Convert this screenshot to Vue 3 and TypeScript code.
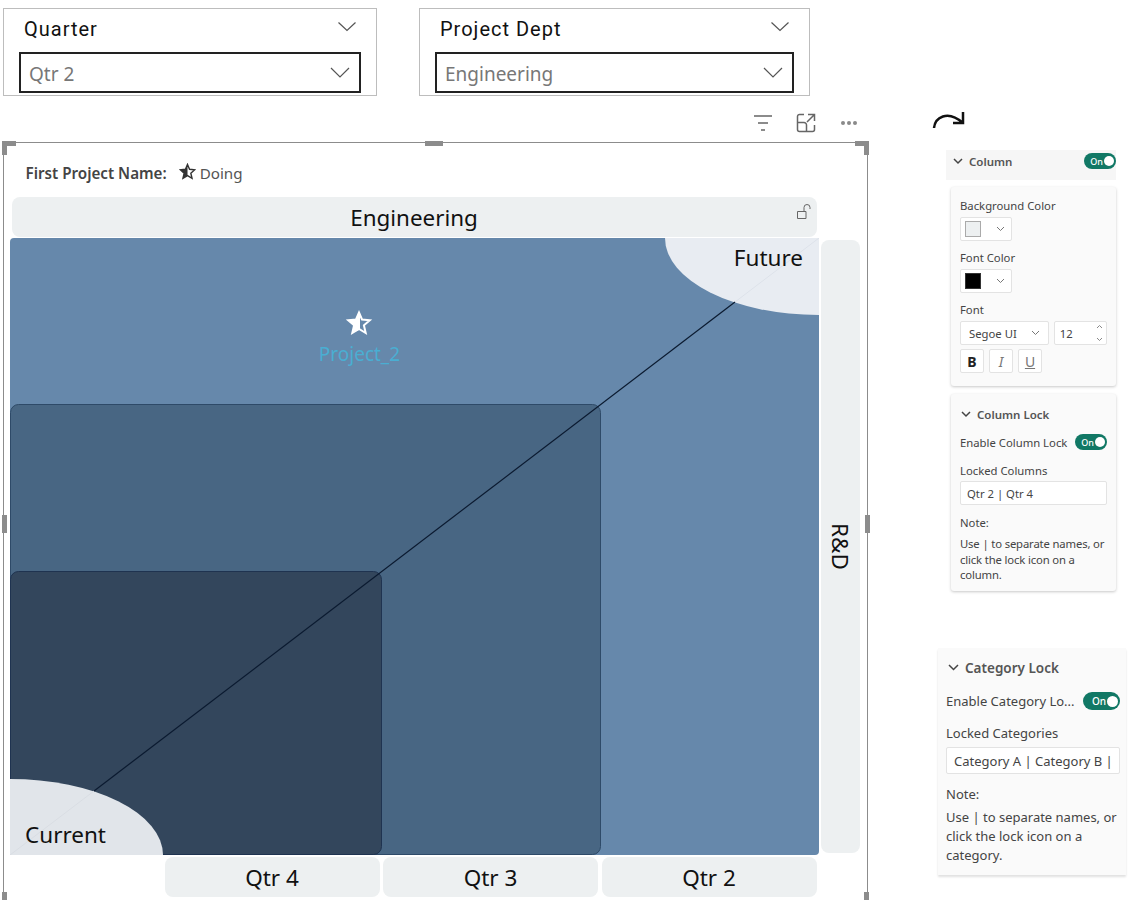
<script setup lang="ts">
interface Slicer { title: string; value: string; width: number }
const slicers: Slicer[] = [
  { title: 'Quarter', value: 'Qtr 2', width: 374 },
  { title: 'Project Dept', value: 'Engineering', width: 391 },
]
const quarters = ['Qtr 4', 'Qtr 3', 'Qtr 2']
const handles = ['h-tl', 'h-tr', 'h-bl', 'h-br', 'h-t', 'h-l', 'h-r']
</script>

<template>
  <div class="page">
    <div class="left">
      <div class="slicers">
        <div v-for="s in slicers" :key="s.title" class="slicer" :style="{ width: s.width + 'px' }">
          <div class="slicer-head">
            <span class="slicer-title">{{ s.title }}</span>
            <svg class="chev" width="20" height="11" viewBox="0 0 20 11"><path d="M1.5 1.5 10 9.5 18.5 1.5" /></svg>
          </div>
          <div class="slicer-box">
            <span class="slicer-value">{{ s.value }}</span>
            <svg class="chev" width="20" height="11" viewBox="0 0 20 11"><path d="M1 1 10 10 19 1" /></svg>
          </div>
        </div>
      </div>

      <div class="toolbar">
        <svg width="20" height="18" viewBox="0 0 20 18" class="tool"><path d="M1 2h18M5 9h10M8 16h4" /></svg>
        <svg width="20" height="20" viewBox="0 0 20 20" class="tool"><path d="M8 1.500H3.500a2 2 0 0 0-2 2v13a2 2 0 0 0 2 2h13a2 2 0 0 0 2-2V12M1.500 9.500H8a2.500 2.500 0 0 1 2.500 2.500v6.500M12 1.500h6.500V8M18.500 1.500 11 9" /></svg>
        <span class="dots"><i></i><i></i><i></i></span>
      </div>

      <div class="visual">
        <span v-for="h in handles" :key="h" class="handle" :class="h"></span>
        <div class="info">
          <b>First Project Name:</b>
          <svg class="info-star" width="17" height="17" viewBox="0 0 24 24">
            <path d="M12 2 14.900 8.800 22.300 9.500 16.700 14.400 18.400 21.600 12 17.800 5.600 21.600 7.300 14.400 1.700 9.500 9.100 8.800Z" fill="none" stroke="#333" stroke-width="2" />
            <path d="M12 2V17.800L5.600 21.600 7.300 14.400 1.700 9.500 9.100 8.800Z" fill="#333" />
          </svg>
          <span>Doing</span>
        </div>
        <div class="col-head">
          <span>Engineering</span>
          <svg class="lock" width="16" height="17" viewBox="0 0 16 17"><path d="M1.500 8.500h8.500v7H1.500zM8 8.500V4.500a3 3 0 0 1 6 0V6" /></svg>
        </div>
        <div class="chart-row">
          <svg class="chart" width="809" height="617" viewBox="0 0 809 617">
            <rect width="809" height="617" rx="4" fill="#6688ab" />
            <rect x="0.500" y="166.500" width="590" height="450" rx="8" fill="#486683" stroke="#2e4a68" />
            <rect x="0.500" y="333.500" width="371" height="283" rx="8" fill="#33465c" stroke="#1f3350" />
            <path d="M0 617V541A153 76 0 0 1 153 617Z" fill="#e1e5ea" />
            <path d="M809 0V77A154 77 0 0 1 655 0Z" fill="#e8ecf2" />
            <line x1="84" y1="553" x2="725" y2="64" stroke="#0b1a30" stroke-width="1.200" />
            <line x1="0" y1="617" x2="84" y2="553" stroke="#d9dde3" stroke-width="1" />
            <line x1="725" y1="64" x2="809" y2="0" stroke="#dde2ea" stroke-width="1" />
            <g transform="translate(337 73)">
              <path d="M12 1.500 15 8.500 22.800 9.200 16.900 14.300 18.700 22 12 18 5.300 22 7.100 14.300 1.200 9.200 9 8.500Z" fill="none" stroke="#fff" stroke-width="2" />
              <path d="M13 1.500V18.500L5.300 22 7.100 14.300 1.200 9.200 9 8.500 12 1.500Z" fill="#fff" />
            </g>
            <text x="349.500" y="123" text-anchor="middle" class="project">Project_2</text>
            <text x="793" y="28" text-anchor="end" class="zone">Future</text>
            <text x="15" y="605" class="zone">Current</text>
          </svg>
          <div class="row-head"><span>R&amp;D</span></div>
        </div>
        <div class="bottom">
          <div v-for="q in quarters" :key="q" class="q-head">{{ q }}</div>
        </div>
      </div>
    </div>

    <div class="right">
      <svg class="arrow" width="34" height="20" viewBox="0 0 34 20"><path d="M2 18C3 8 15 -1 31 13M31 2V13H21" /></svg>
      <div class="sec-head">
        <svg class="mini" width="10" height="7" viewBox="0 0 10 7"><path d="M1 1 5 5 9 1" /></svg>
        <b>Column</b>
        <span class="toggle"><em>On</em><i></i></span>
      </div>
      <div class="card c-format">
        <label>Background Color</label>
        <div class="swatch"><i class="light"></i><svg class="mini2" width="9" height="6" viewBox="0 0 9 6"><path d="M1 1 4.500 4.500 8 1" /></svg></div>
        <label class="mt">Font Color</label>
        <div class="swatch"><i class="black"></i><svg class="mini2" width="9" height="6" viewBox="0 0 9 6"><path d="M1 1 4.500 4.500 8 1" /></svg></div>
        <label class="mt">Font</label>
        <div class="font-row">
          <div class="font-name"><span>Segoe UI</span><svg class="mini2" width="9" height="6" viewBox="0 0 9 6"><path d="M1 1 4.500 4.500 8 1" /></svg></div>
          <div class="font-size"><span>12</span>
            <svg class="spin" width="7" height="20" viewBox="0 0 7 20"><path d="M1 5 3.500 2.500 6 5M1 15 3.500 17.500 6 15" /></svg>
          </div>
        </div>
        <div class="fmt-row">
          <span class="fmt bold">B</span>
          <span class="fmt ital">I</span>
          <span class="fmt under">U</span>
        </div>
      </div>
      <div class="card c-lock">
        <div class="lock-head">
          <svg class="mini" width="10" height="7" viewBox="0 0 10 7"><path d="M1 1 5 5 9 1" /></svg>
          <b>Column Lock</b>
        </div>
        <div class="enable"><span>Enable Column Lock</span><span class="toggle"><em>On</em><i></i></span></div>
        <label class="locked">Locked Columns</label>
        <div class="input">Qtr 2 | Qtr 4</div>
        <p class="note">Note:</p>
        <p class="note-text">Use | to separate names, or click the lock icon on a column.</p>
      </div>
      <div class="cat">
        <div class="cat-head">
          <svg class="mini" width="11" height="8" viewBox="0 0 11 8"><path d="M1 1 5.500 5.500 10 1" /></svg>
          <b>Category Lock</b>
        </div>
        <div class="enable"><span>Enable Category Lo...</span><span class="toggle big"><em>On</em><i></i></span></div>
        <label class="locked">Locked Categories</label>
        <div class="input">Category A | Category B |</div>
        <p class="note">Note:</p>
        <p class="note-text">Use | to separate names, or click the lock icon on a category.</p>
      </div>
    </div>
  </div>
</template>

<style scoped>
.page {
  width: 1136px;
  height: 900px;
  overflow: hidden;
  display: flex;
  background: #fff;
  font-family: "Noto Sans", "Open Sans", sans-serif;
  color: #222;
}
.left { width: 930px; flex: none; padding: 8px 0 0 3px; box-sizing: border-box; }
.slicers { display: flex; gap: 42px; height: 88px; }
.slicer {
  box-sizing: border-box;
  height: 88px;
  border: 1.500px solid #bdbdbd;
  padding: 0 15.500px 0 15px;
}
.slicer-head {
  height: 42.500px;
  display: flex;
  justify-content: space-between;
  align-items: center;
  padding: 0 4px 3px 5px;
  box-sizing: border-box;
}
.slicer-head .chev { margin-top: -4px; }
.slicer-title {
  font-family: Roboto, "Noto Sans", sans-serif;
  font-size: 20px;
  font-weight: 400;
  letter-spacing: 1px;
  color: #111;
}
.slicer-box {
  height: 41px;
  box-sizing: border-box;
  border: 2px solid #222;
  display: flex;
  justify-content: space-between;
  align-items: center;
  padding: 0 9px 0 8px;
}
.slicer-value { font-size: 19px; color: #777; padding-top: 3px; }
.chev path { fill: none; stroke: #555; stroke-width: 1.200; }
.toolbar {
  height: 46px;
  display: flex;
  justify-content: flex-end;
  align-items: center;
  gap: 23px;
  width: 854px;
  box-sizing: border-box;
  padding-top: 8px;
}
.tool path { fill: none; stroke: #666; stroke-width: 1.500; }
.dots { display: inline-flex; gap: 2px; margin-left: 2px; }
.dots i { width: 4px; height: 4px; border-radius: 50%; background: #8a8a8a; }
.visual {
  position: relative;
  width: 865px;
  height: 780px;
  box-sizing: border-box;
  border: 1.500px solid #8c8c8c;
  border-bottom: none;
  padding-left: 5.500px;
}
.handle { position: absolute; background: #8c8c8c; }
.h-tl { left: -2px; top: -2px; width: 14px; height: 5px; }
.h-tl::after, .h-tr::after { content: ""; position: absolute; top: 0; width: 5px; height: 14px; background: #8c8c8c; }
.h-tl::after { left: 0; }
.h-tr { right: -2px; top: -2px; width: 14px; height: 5px; }
.h-tr::after { right: 0; }
.h-bl { left: -2px; top: 749px; width: 5px; height: 14px; }
.h-br { right: -2px; top: 749px; width: 5px; height: 14px; }
.h-t { left: 421px; top: -2px; width: 18px; height: 5px; }
.h-l { left: -2px; top: 372px; width: 5px; height: 18px; }
.h-r { right: -3px; top: 372px; width: 5px; height: 18px; }
.info {
  height: 54px;
  box-sizing: border-box;
  padding: 5px 0 0 16px;
  display: flex;
  align-items: center;
  font-size: 15.200px;
  color: #555;
}
.info b { font-weight: 600; color: #444; }
.info-star { margin: -2px 4px 0 12px; }
.col-head {
  position: relative;
  margin-left: 2px;
  width: 805px;
  height: 40px;
  border-radius: 8px;
  background: #edf0f1;
  display: flex;
  align-items: center;
  justify-content: center;
  font-size: 22.400px;
  color: #111;
  margin-bottom: 1px;
}
.lock { position: absolute; right: 5px; top: 6px; }
.lock path { fill: none; stroke: #666; stroke-width: 1; }
.chart-row { display: flex; align-items: flex-start; }
.chart { display: block; flex: none; }
.project { font-size: 19px; fill: #4aaed2; font-family: "Noto Sans", sans-serif; }
.zone { font-size: 22.500px; fill: #111; font-family: "Noto Sans", sans-serif; }
.row-head {
  margin: 2px 0 0 2px;
  width: 39px;
  height: 613px;
  border-radius: 8px;
  background: #edf0f1;
  display: flex;
  align-items: center;
  justify-content: center;
}
.row-head span {
  writing-mode: vertical-rl;
  font-size: 22.500px;
  color: #111;
}
.bottom { display: flex; gap: 3.500px; margin: 2px 0 0 155px; }
.q-head {
  width: 215px;
  height: 40px;
  border-radius: 8px;
  background: #edf0f1;
  display: flex;
  align-items: center;
  justify-content: center;
  font-size: 22.500px;
  color: #111;
}
.right {
  width: 206px;
  flex: none;
  padding-top: 110px;
  box-sizing: border-box;
  font-size: 11.300px;
  color: #444;
}
.arrow { display: block; margin-left: 2px; }
.arrow path { fill: none; stroke: #111; stroke-width: 2.500; }
.mini path { fill: none; stroke: #444; stroke-width: 1.500; }
.mini2 path { fill: none; stroke: #777; stroke-width: 1; }
.spin path { fill: none; stroke: #888; stroke-width: 1; }
.sec-head {
  margin: 20px 0 0 16px;
  width: 170px;
  height: 30px;
  box-sizing: border-box;
  background: #f6f6f6;
  display: flex;
  align-items: center;
  padding: 0 0 8px 7px;
  gap: 6px;
}
.sec-head b { font-size: 11.500px; font-weight: 600; color: #555; flex: 1; }
.toggle {
  width: 32px;
  height: 16px;
  border-radius: 8px;
  background: #117865;
  display: inline-flex;
  align-items: center;
  justify-content: flex-end;
  gap: 1px;
  padding-right: 2px;
  box-sizing: border-box;
  flex: none;
}
.toggle em { font-style: normal; font-size: 9px; color: #fff; font-weight: 500; }
.toggle i { width: 10px; height: 10px; border-radius: 50%; background: #fff; }
.card {
  margin-left: 21px;
  width: 165px;
  box-sizing: border-box;
  background: #fafafa;
  border-radius: 3px;
  box-shadow: 0 1px 3px rgba(0, 0, 0, 0.22);
  padding: 0 9px;
}
label { display: block; line-height: 16px; }
.mt { margin-top: 9px; }
.c-format { margin-top: 7px; height: 199px; padding-top: 11px; }
.swatch {
  margin-top: 3px;
  width: 52px;
  height: 24px;
  box-sizing: border-box;
  background: #fff;
  border: 1px solid #e3e3e3;
  border-radius: 2px;
  display: flex;
  align-items: center;
  padding: 0 6px 0 4px;
  justify-content: space-between;
}
.swatch i { width: 16px; height: 16px; box-sizing: border-box; border: 1px solid #aaa; }
.swatch .light { background: #edf0f1; }
.swatch .black { background: #000; border-color: #333; }
.font-row { display: flex; gap: 5px; margin-top: 3px; }
.font-name, .font-size {
  height: 24px;
  box-sizing: border-box;
  background: #fff;
  border: 1px solid #e3e3e3;
  border-radius: 2px;
  display: flex;
  align-items: center;
  justify-content: space-between;
}
.font-name { width: 90px; padding: 0 8px; }
.font-size { width: 54px; padding: 0 3px 0 5px; }
.fmt-row { display: flex; gap: 5px; margin-top: 4px; }
.fmt {
  width: 24px;
  height: 24px;
  box-sizing: border-box;
  background: #fff;
  border: 1px solid #e3e3e3;
  border-radius: 2px;
  display: flex;
  align-items: center;
  justify-content: center;
  font-size: 14px;
  color: #777;
}
.bold { font-weight: 700; color: #222; }
.ital { font-style: italic; }
.under { text-decoration: underline; }
.c-lock { margin-top: 8px; height: 197px; padding-top: 12px; }
.lock-head { display: flex; align-items: center; gap: 6px; padding-left: 1px; height: 16px; }
.lock-head b { font-size: 11.500px; font-weight: 600; color: #555; }
.enable {
  display: flex;
  justify-content: space-between;
  align-items: center;
  margin-top: 12px;
  height: 16px;
}
.locked { margin-top: 13px; }
.input {
  margin-top: 2px;
  height: 24px;
  box-sizing: border-box;
  background: #fff;
  border: 1px solid #e3e3e3;
  border-radius: 2px;
  padding: 0 6px;
  display: flex;
  align-items: center;
  white-space: nowrap;
  overflow: hidden;
}
.note { margin: 10px 0 0; line-height: 16px; }
.note-text { margin: 5px 0 0; line-height: 15.500px; letter-spacing: -0.15px; }
.cat {
  margin: 57px 0 0 8px;
  width: 188px;
  height: 227px;
  box-sizing: border-box;
  padding: 11px 6px 0 8px;
  background: #fafafa;
  box-shadow: 0 2px 2px rgba(0, 0, 0, 0.12);
  font-size: 13px;
}
.cat-head { display: flex; align-items: center; gap: 6px; height: 18px; padding-left: 2px; }
.cat-head b { font-size: 13.500px; font-weight: 600; color: #555; }
.cat .enable { margin-top: 15px; height: 18px; }
.cat .locked { margin-top: 14px; line-height: 18px; }
.cat .input { height: 27px; margin-top: 5px; padding: 0 7px; width: 174px; }
.cat .note { margin-top: 11px; line-height: 18px; }
.cat .note-text { margin-top: 5px; line-height: 19px; letter-spacing: 0; }
.toggle.big { width: 37px; height: 18px; border-radius: 9px; }
.toggle.big em { font-size: 10px; }
.toggle.big i { width: 11px; height: 11px; }
</style>
